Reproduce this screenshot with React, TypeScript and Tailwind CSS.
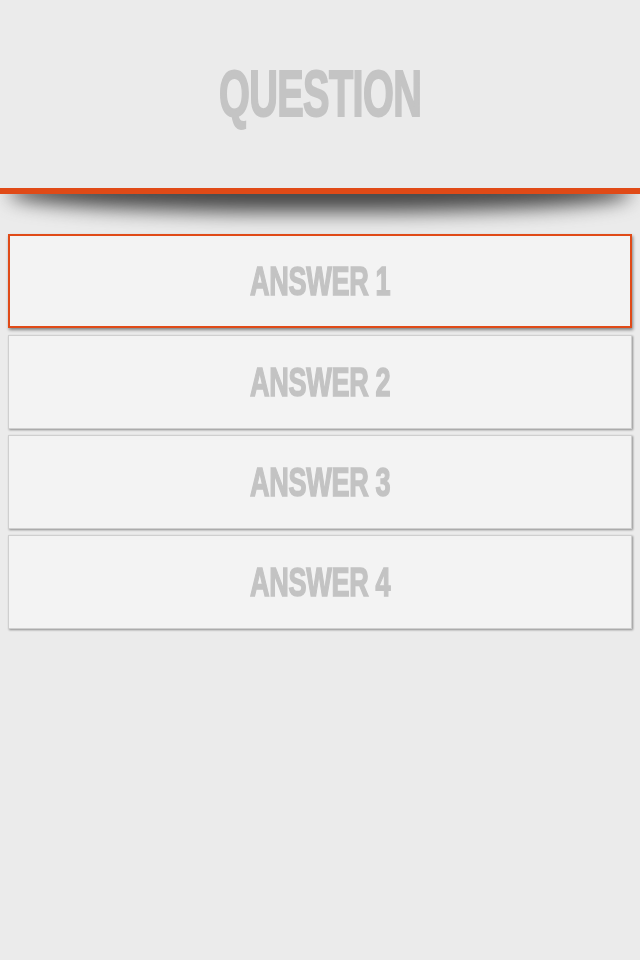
import React from "react";

const answers = ["ANSWER 1", "ANSWER 2", "ANSWER 3", "ANSWER 4"];

const font = { fontFamily: '"Liberation Sans Narrow", "Liberation Sans", Arial, sans-serif' };

export default function App() {
  return (
    <div className="min-h-[960px] w-full bg-[#ebebeb]" style={font}>
      {/* Question header */}
      <div className="flex h-[188px] items-start justify-center pt-[62px]">
        <span className="inline-block origin-center scale-x-[0.62] text-[64px] font-bold leading-none tracking-[-1px] text-[#c4c4c4] [-webkit-text-stroke:2px_#c4c4c4]">
          QUESTION
        </span>
      </div>
      <div className="h-[6px] bg-[#e04a17]" />
      {/* Shadow under header */}
      <div className="relative h-[40px] overflow-hidden">
        <div className="absolute left-[10px] right-[10px] top-[-24px] h-[42px] rounded-[45%] bg-[#474747] blur-[10px]" />
      </div>

      {/* Answers */}
      <div className="flex flex-col gap-[6px] px-[8px]">
        {answers.map((a, i) => (
          <button
            key={a}
            className={
              i === 0
                ? "mb-px flex h-[94px] items-center justify-center border-2 border-[#e04a17] bg-[#f3f3f3] shadow-[1px_2px_3px_rgba(0,0,0,0.45)]"
                : "flex h-[94px] items-center justify-center border border-[#cfcfcf] bg-[#f3f3f3] shadow-[1px_1px_2px_rgba(0,0,0,0.4)]"
            }
            style={font}
          >
            <span className="inline-block scale-x-[0.66] text-[41px] font-bold leading-none tracking-[-0.5px] text-[#c3c3c3] [-webkit-text-stroke:1.5px_#c3c3c3]">
              {a}
            </span>
          </button>
        ))}
      </div>
    </div>
  );
}
